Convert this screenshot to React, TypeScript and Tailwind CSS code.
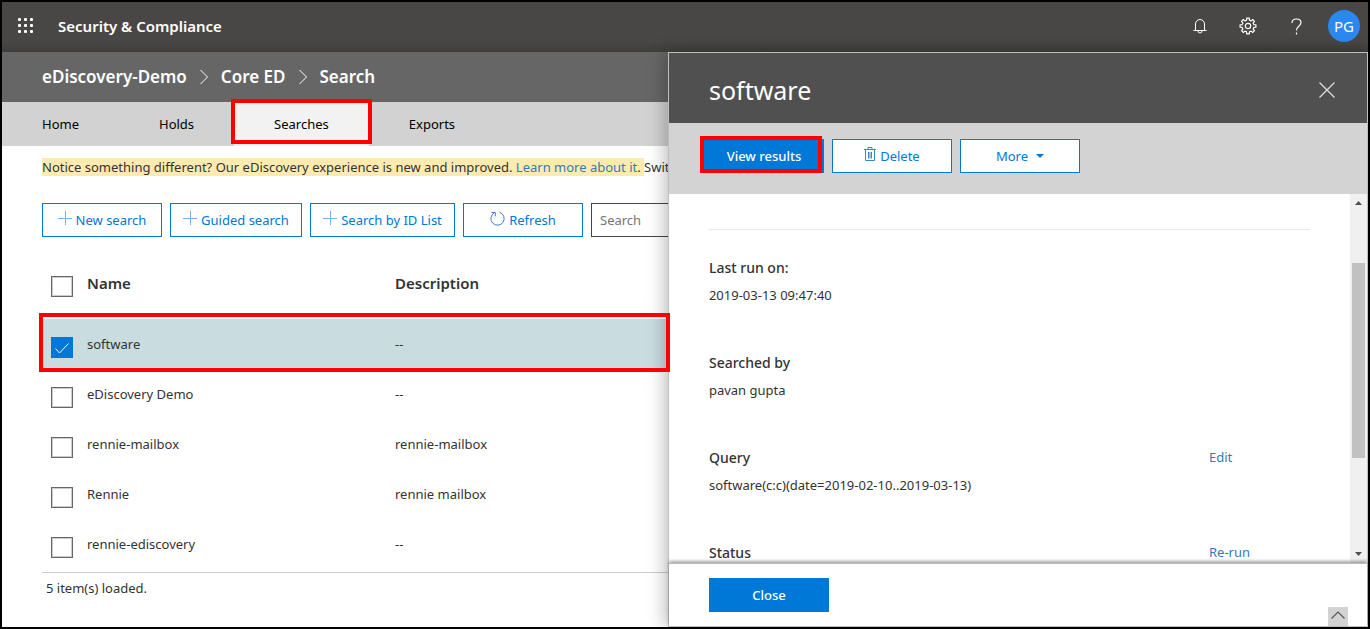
import { FC, ReactNode, useState } from "react";

type Row = { name: string; description: string };

const rows: Row[] = [
  { name: "software", description: "--" },
  { name: "eDiscovery Demo", description: "--" },
  { name: "rennie-mailbox", description: "rennie-mailbox" },
  { name: "Rennie", description: "rennie mailbox" },
  { name: "rennie-ediscovery", description: "--" },
];

const tabs = ["Home", "Holds", "Searches", "Exports"];

const details = [
  { label: "Last run on:", value: "2019-03-13 09:47:40", action: "" },
  { label: "Searched by", value: "pavan gupta", action: "" },
  { label: "Query", value: "software(c:c)(date=2019-02-10..2019-03-13)", action: "Edit" },
  { label: "Status", value: "", action: "Re-run" },
];

// outline of the eight-toothed gear, centred on 9,9
const gearPoints = Array.from({ length: 8 }, (_, i) =>
  [
    [-14, 6],
    [-9, 8],
    [9, 8],
    [14, 6],
  ].map(([offset, r]) => {
    const a = ((i * 45 + offset) * Math.PI) / 180;
    return `${(9 + r * Math.sin(a)).toFixed(2)},${(9 - r * Math.cos(a)).toFixed(2)}`;
  }).join(" ")
).join(" ");

const WaffleIcon = () => (
  <svg width="16" height="16" viewBox="0 0 16 16" fill="currentColor">
    {[0, 6, 12].map((y) =>
      [0, 6, 12].map((x) => <rect key={`${x}-${y}`} x={x} y={y} width="3" height="3" rx="1" />)
    )}
  </svg>
);

const PlusIcon = () => (
  <svg width="14" height="14" viewBox="0 0 14 14" stroke="#7fb0e6" fill="none">
    <path d="M7.5 0v14M0 7.5h14" />
  </svg>
);

const RefreshIcon = () => (
  <svg width="15" height="15" viewBox="0 0 15 15" stroke="#3c7fd0" fill="none">
    <path d="M9.5 1.3A6.6 6.6 0 1 1 4.2 1.9M1.5 1.5h3.8v3.8" />
  </svg>
);

const TrashIcon = () => (
  <svg width="12" height="15" viewBox="0 0 12 15" stroke="#3a86cc" fill="none">
    <path d="M0 2.5h12M4 2.5v-2h4v2M1.5 2.5v11h9v-11M4.5 5v6.5M6 5v6.5M7.5 5v6.5" />
  </svg>
);

const Chevron = () => (
  <svg width="10" height="16" viewBox="0 0 10 16" stroke="#fff" fill="none">
    <path d="M1.5 1l7 7-7 7" />
  </svg>
);

const CheckBox: FC<{ label: string; checked: boolean; onChange: () => void }> = ({ label, checked, onChange }) => (
  <label className="mt-1.5 grid h-[21px] w-[22px]">
    <input
      type="checkbox"
      aria-label={label}
      checked={checked}
      onChange={onChange}
      className="col-start-1 row-start-1 h-[21px] w-[22px] appearance-none border border-[#666] bg-white outline outline-[#ccc] -outline-offset-2 checked:border-[#0078d7] checked:bg-[#0078d7] checked:outline-none"
    />
    {checked && (
      <svg className="pointer-events-none col-start-1 row-start-1" width="22" height="21" viewBox="0 0 22 21" stroke="#fff" fill="none">
        <path d="M4.5 11.5l4 4.5 9-9.5" />
      </svg>
    )}
  </label>
);

const ToolButton: FC<{ icon: ReactNode; width: string; children: ReactNode }> = ({ icon, width, children }) => (
  <button className={`${width} flex h-[34px] shrink-0 items-center justify-center gap-1 border border-[#0078d7] bg-white text-[#0078d7]`}>
    <span className="pb-1">{icon}</span>
    {children}
  </button>
);

const App = () => {
  const [selected, setSelected] = useState<string[]>(["software"]);
  const toggle = (name: string) =>
    setSelected((prev) => (prev.includes(name) ? prev.filter((n) => n !== name) : [...prev, name]));

  return (
    <div className="flex h-screen flex-col overflow-hidden border-2 border-black bg-white font-['Noto_Sans','Open_Sans',sans-serif] text-[13px] leading-5 text-[#333]">
      <header className="flex h-[50px] shrink-0 items-center bg-linear-to-b from-[#494745] from-80% to-[#3f3e3c] pr-2 pb-0.5 pl-4 text-white">
        <button aria-label="App launcher">
          <WaffleIcon />
        </button>
        <h1 className="ml-6 text-[15px] font-semibold">Security &amp; Compliance</h1>
        <div className="ml-auto flex items-center">
          <button aria-label="Notifications" className="flex w-12 justify-center">
            <svg width="14" height="16" viewBox="0 0 14 16" stroke="#fff" fill="none">
              <path d="M0.5 12.5h13M2.5 12.5V6a4.5 4.5 0 0 1 9 0v6.5M5 13a2 2 0 0 0 4 0" />
            </svg>
          </button>
          <button aria-label="Settings" className="flex w-12 justify-center">
            <svg width="18" height="18" viewBox="0 0 18 18" stroke="#fff" strokeWidth="1.2" fill="none">
              <polygon points={gearPoints} strokeLinejoin="round" />
              <circle cx="9" cy="9" r="2.7" />
            </svg>
          </button>
          <button aria-label="Help" className="flex w-12 justify-center">
            <svg width="11" height="17" viewBox="0 0 11 17" stroke="#fff" strokeWidth="1.2" fill="none">
              <path d="M1 5C1 2.3 3 1 5.5 1S10 2.4 10 4.7C10 8 5.5 8 5.5 12.5M5.5 14.5v2" />
            </svg>
          </button>
          <button className="ml-2 size-8 rounded-full bg-[#2b88ef] text-[15px]">PG</button>
        </div>
      </header>

      <div className="flex min-h-0 grow">
        <main className="min-w-0 grow">
          <nav aria-label="Breadcrumb" className="flex h-[50px] items-center gap-3 bg-[#666] pl-10 text-[17px] font-semibold text-white">
            <a href="#demo">eDiscovery-Demo</a>
            <Chevron />
            <a href="#core">Core ED</a>
            <Chevron />
            <a href="#search">Search</a>
          </nav>

          <nav aria-label="Sections" className="flex h-11 bg-[#d2d2d2] text-black">
            {tabs.map((tab) => (
              <a
                key={tab}
                href={`#${tab.toLowerCase()}`}
                className={`relative flex items-center px-10 ${tab === "Searches" ? "bg-[#f2f2f2]" : ""}`}
              >
                {tab}
                {tab === "Searches" && <span className="absolute -inset-x-[3px] -top-[3px] bottom-0.5 border-4 border-[#f00]" />}
              </a>
            ))}
          </nav>

          <p className="mt-[11px] ml-10 overflow-hidden whitespace-nowrap">
            <span className="bg-[#ffebb0]">
              Notice something different? Our eDiscovery experience is new and improved.{" "}
              <a href="#learn" className="text-[#337ab7]">Learn more about it</a>.{" "}
            </span>
            Switch back
          </p>

          <div className="mt-[26px] ml-10 flex gap-2 overflow-hidden">
            <ToolButton icon={<PlusIcon />} width="w-[120px]">New search</ToolButton>
            <ToolButton icon={<PlusIcon />} width="w-[132px]">Guided search</ToolButton>
            <ToolButton icon={<PlusIcon />} width="w-[145px]">Search by ID List</ToolButton>
            <ToolButton icon={<RefreshIcon />} width="w-[120px]">Refresh</ToolButton>
            <input
              type="search"
              aria-label="Search"
              placeholder="Search"
              className="h-[34px] w-[200px] shrink-0 border border-[#444] px-2 placeholder:text-[#757575]"
            />
          </div>

          <div className="mt-2.5 ml-10 border-b border-[#ccc] pb-[3px]">
            <table className="w-full table-fixed text-left">
              <colgroup>
                <col className="w-[45px]" />
                <col className="w-[308px]" />
                <col />
              </colgroup>
              <thead>
                <tr className="h-[72px] text-[15px]">
                  <th className="pl-[9px]">
                    <CheckBox
                      label="Select all"
                      checked={selected.length === rows.length}
                      onChange={() => setSelected(selected.length === rows.length ? [] : rows.map((r) => r.name))}
                    />
                  </th>
                  <th className="font-semibold">Name</th>
                  <th className="font-semibold">Description</th>
                </tr>
              </thead>
              <tbody>
                {rows.map((row) => (
                  <tr key={row.name} className={`relative h-[50px] ${selected.includes(row.name) ? "bg-[#c9dce0]" : ""}`}>
                    <td className="pl-[9px]">
                      <CheckBox label={row.name} checked={selected.includes(row.name)} onChange={() => toggle(row.name)} />
                      {row.name === "software" && (
                        <span className="pointer-events-none absolute -top-1.5 -right-0.5 -bottom-[3px] -left-[3px] z-20 border-4 border-[#f00]" />
                      )}
                    </td>
                    <td>{row.name}</td>
                    <td>{row.description}</td>
                  </tr>
                ))}
              </tbody>
            </table>
          </div>
          <p className="mt-[5px] ml-11">5 item(s) loaded.</p>
        </main>

        <aside className="relative z-10 flex w-[51.25%] shrink-0 flex-col border border-[#bfbfbf] bg-white shadow-[-4px_0_16px_rgba(0,0,0,0.25)]">
          <div className="flex h-[70px] shrink-0 items-center justify-between bg-[#505050] pt-1 pr-8 pl-10 text-white">
            <h2 className="text-[25px]">software</h2>
            <button aria-label="Close panel">
              <svg width="16" height="16" viewBox="0 0 16 16" stroke="#ddd" strokeWidth="1.3" fill="none">
                <path d="M0.5 0.5l15 15M15.5 0.5l-15 15" />
              </svg>
            </button>
          </div>

          <div className="flex h-[71px] shrink-0 gap-2 bg-[#d3d3d3] pt-4 pl-[35px]">
            <button className="relative h-[34px] w-[120px] bg-[#0078d7] font-medium text-white">
              View results
              <span className="absolute -top-[3px] right-0.5 bottom-0 -left-1 border-4 border-[#f00]" />
            </button>
            <ToolButton icon={<TrashIcon />} width="w-[120px]">Delete</ToolButton>
            <button className="flex h-[34px] w-[120px] items-center justify-center gap-2 border border-[#0078d7] bg-white text-[#0078d7]">
              More
              <svg width="8" height="4" viewBox="0 0 8 4" fill="currentColor">
                <path d="M0 0h8L4 4z" />
              </svg>
            </button>
          </div>

          <div className="flex min-h-0 grow">
            <div className="grow overflow-hidden pr-10 pl-10">
              <hr className="mt-[35px] border-[#eaeaea]" />
              <dl className="pt-7">
                {details.map((item) => (
                  <div key={item.label} className="h-[95px]">
                    <dt className="flex text-sm font-medium text-[#333]">
                      {item.label}
                      {item.action && (
                        <a href={`#${item.action.toLowerCase()}`} className="ml-auto w-[101px] text-[13px] font-normal text-[#337ab7]">
                          {item.action}
                        </a>
                      )}
                    </dt>
                    {item.value && <dd className="mt-[7px]">{item.value}</dd>}
                  </div>
                ))}
              </dl>
            </div>
            <div className="flex w-[17px] shrink-0 flex-col items-center bg-[#f0f0f0] py-[7px]">
              <svg width="7" height="4" viewBox="0 0 7 4" fill="#505050">
                <path d="M0 4h7L3.5 0z" />
              </svg>
              <div className="flex-[58]" />
              <div className="w-[13px] flex-[194] bg-[#c1c1c1]" />
              <div className="flex-[93]" />
              <svg width="7" height="4" viewBox="0 0 7 4" fill="#505050">
                <path d="M0 0h7L3.5 4z" />
              </svg>
            </div>
          </div>

          <div className="relative flex h-[63px] shrink-0 items-center border-t border-[#bbb] bg-white pl-10 shadow-[0_-2px_3px_rgba(0,0,0,0.35)]">
            <button className="h-[34px] w-[120px] bg-[#0078d7] font-medium text-white">Close</button>
            <button aria-label="Scroll to top" className="absolute right-[19px] bottom-0 flex h-[19px] w-5 justify-center bg-[#d3d3d3] pt-1">
              <svg width="14" height="8" viewBox="0 0 14 8" stroke="#555" strokeWidth="1.2" fill="none">
                <path d="M0.5 7.5L7 1l6.5 6.5" />
              </svg>
            </button>
          </div>
        </aside>
      </div>
    </div>
  );
};

export default App;
